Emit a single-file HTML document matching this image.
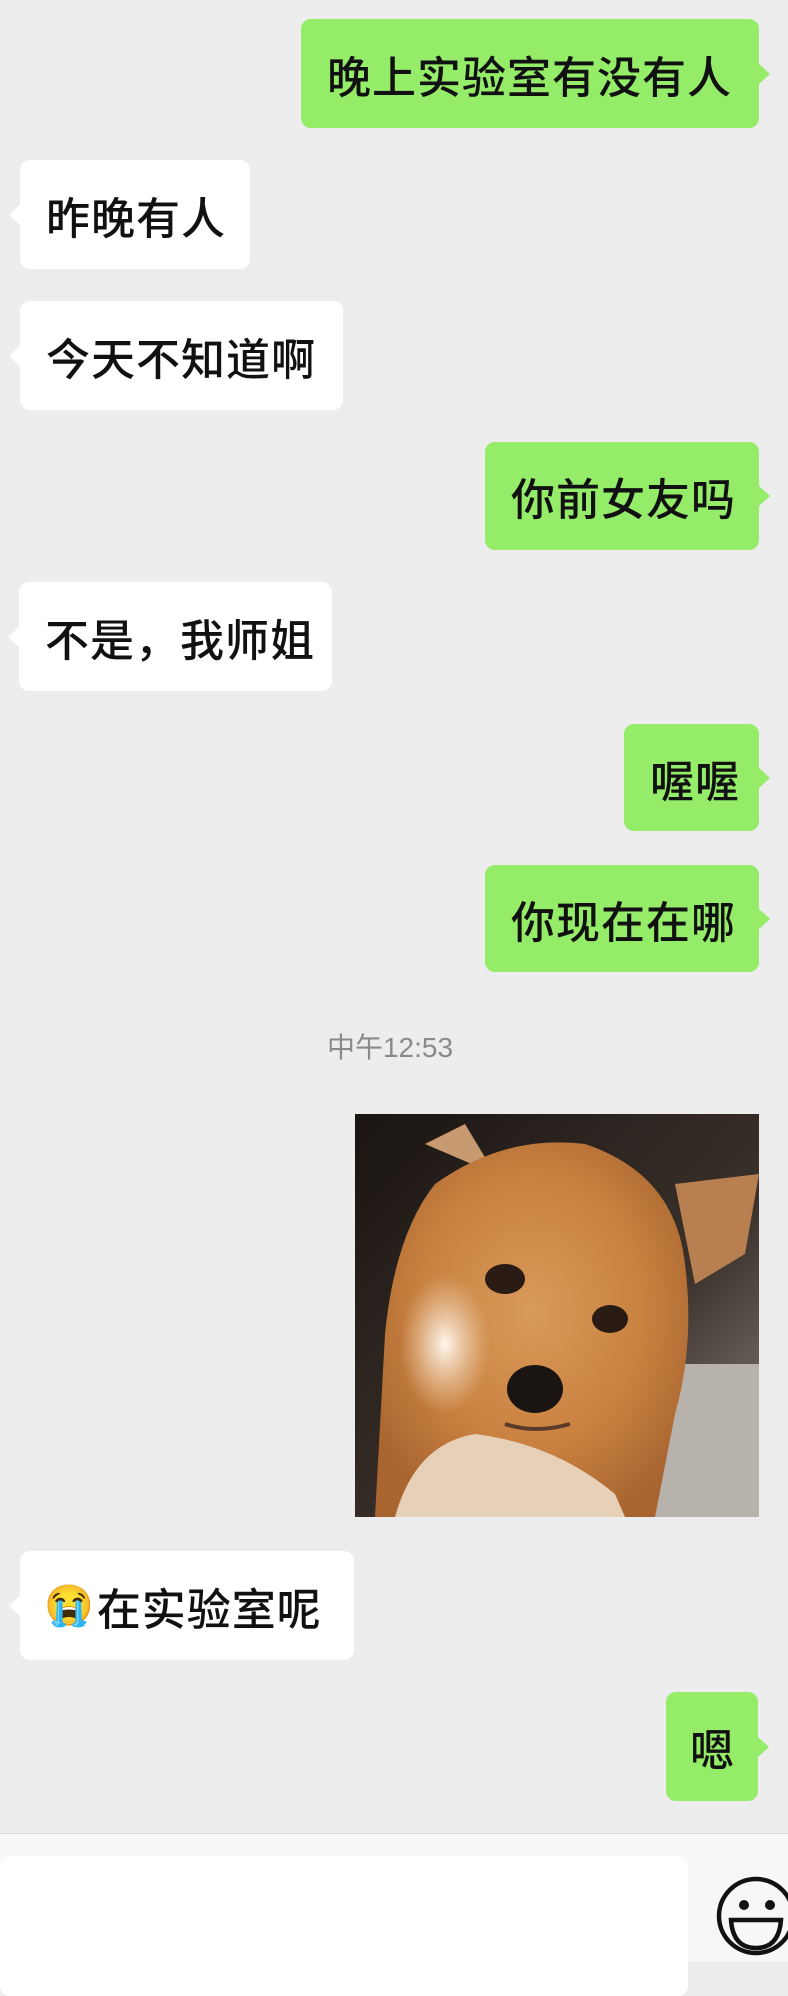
<!DOCTYPE html>
<html><head><meta charset="utf-8">
<style>
html,body{margin:0;padding:0}
body{width:788px;height:1961px;background:#ededed;position:relative;overflow:hidden;font-family:"Liberation Sans","Noto Sans CJK SC",sans-serif;}
.b{position:absolute;border-radius:10px;display:flex;align-items:center;font-size:44px;font-weight:500;letter-spacing:1px;color:#111;box-sizing:border-box;padding-left:26px;white-space:nowrap}
.g{background:#95ec69}
.w{background:#fff}
.g:after{content:"";position:absolute;right:-11px;top:50%;margin-top:-11px;border-left:12px solid #95ec69;border-top:11px solid transparent;border-bottom:11px solid transparent}
.w:before{content:"";position:absolute;left:-11px;top:50%;margin-top:-11px;border-right:12px solid #fff;border-top:11px solid transparent;border-bottom:11px solid transparent}
</style></head><body>
<div class="b g" style="left:301px;top:19px;width:458px;height:109px">晚上实验室有没有人</div>
<div class="b w" style="left:20px;top:160px;width:230px;height:109px">昨晚有人</div>
<div class="b w" style="left:20px;top:301px;width:323px;height:109px">今天不知道啊</div>
<div class="b g" style="left:485px;top:442px;width:274px;height:108px">你前女友吗</div>
<div class="b w" style="left:19px;top:582px;width:313px;height:109px">不是，我师姐</div>
<div class="b g" style="left:624px;top:724px;width:135px;height:107px">喔喔</div>
<div class="b g" style="left:485px;top:865px;width:274px;height:107px">你现在在哪</div>
<div style="position:absolute;left:0;width:780px;top:1026px;text-align:center;font-size:28px;color:#8a8a8a">中午12:53</div>
<svg style="position:absolute;left:355px;top:1114px" width="404" height="403" viewBox="0 0 404 403">
<defs>
<radialGradient id="f" cx="0.5" cy="0.45" r="0.6"><stop offset="0" stop-color="#d99a5a"/><stop offset="0.6" stop-color="#c98140"/><stop offset="1" stop-color="#a86530"/></radialGradient>
<linearGradient id="bg" x1="0" y1="0" x2="1" y2="1"><stop offset="0" stop-color="#1a1512"/><stop offset="0.6" stop-color="#3a302a"/><stop offset="1" stop-color="#8a8480"/></linearGradient>
<radialGradient id="wh" cx="0.5" cy="0.5" r="0.5"><stop offset="0" stop-color="#fff8ee"/><stop offset="1" stop-color="#f0d6b8" stop-opacity="0"/></radialGradient>
</defs>
<rect width="404" height="403" fill="url(#bg)"/>
<rect x="300" y="250" width="104" height="153" fill="#b8b2ac"/>
<path d="M70 30 L110 10 L140 60 Z" fill="#c89a70"/>
<path d="M320 70 L404 60 L390 140 L340 170 Z" fill="#b88050"/>
<path d="M20 403 L30 220 Q40 120 80 70 Q150 20 230 30 Q320 60 330 150 Q340 230 320 300 L300 403 Z" fill="url(#f)"/>
<path d="M40 403 Q60 330 120 320 Q200 330 260 380 L270 403 Z" fill="#e6d0b8"/>
<ellipse cx="90" cy="230" rx="45" ry="70" fill="url(#wh)"/>
<ellipse cx="150" cy="165" rx="20" ry="15" fill="#2a1c14"/>
<ellipse cx="255" cy="205" rx="18" ry="14" fill="#2a1c14"/>
<ellipse cx="180" cy="275" rx="28" ry="24" fill="#1a1412"/>
<path d="M150 310 Q180 320 215 310" stroke="#5a3a28" stroke-width="4" fill="none"/>
</svg>
<div class="b w" style="left:20px;top:1551px;width:334px;height:109px;padding-left:24px"><span style="font-size:40px;margin-right:2px;font-family:'Noto Color Emoji',sans-serif">😭</span>在实验室呢</div>
<div class="b g" style="left:666px;top:1692px;width:92px;height:109px;padding-left:24px">嗯</div>
<div style="position:absolute;left:0;top:1833px;width:788px;height:128px;background:#f7f7f7;border-top:1px solid #d8d8d8"></div>
<div style="position:absolute;left:0;top:1856px;width:688px;height:140px;background:#fff;border-radius:10px"></div>
<svg style="position:absolute;left:715px;top:1872px" width="73" height="89" viewBox="0 0 73 89">
<circle cx="41" cy="44" r="37" fill="none" stroke="#111" stroke-width="4.5"/>
<circle cx="29" cy="33" r="5" fill="#111"/>
<circle cx="55" cy="33" r="5" fill="#111"/>
<path d="M16 48 L66 48 Q64 76 41 76 Q18 76 16 48 Z" fill="none" stroke="#111" stroke-width="4.5"/>
</svg>
</body></html>
